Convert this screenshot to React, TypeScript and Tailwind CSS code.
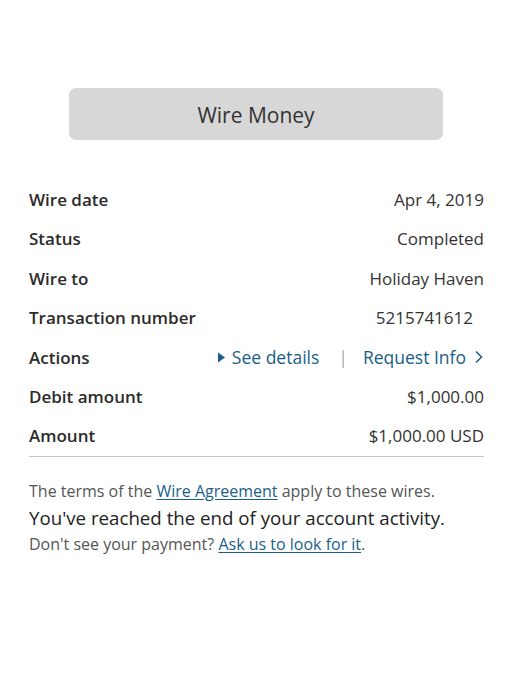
import React from 'react';

const rows: { label: string; value: string; extra?: string }[] = [
  { label: 'Wire date', value: 'Apr 4, 2019' },
  { label: 'Status', value: 'Completed' },
  { label: 'Wire to', value: 'Holiday Haven' },
  { label: 'Transaction number', value: '5215741612', extra: 'pr-[11px]' },
];

const rows2 = [
  { label: 'Debit amount', value: '$1,000.00' },
  { label: 'Amount', value: '$1,000.00 USD' },
];

const Row: React.FC<{ label: string; children: React.ReactNode }> = ({ label, children }) => (
  <div className="flex h-[39.4px] items-center justify-between">
    <span className="font-semibold text-[#2b2b2b]">{label}</span>
    {children}
  </div>
);

export default function App() {
  return (
    <div className="min-h-[700px] bg-white pl-[29px] pr-[22px] pt-[88px] text-[17px] font-['Open_Sans',sans-serif] text-[#333]">
      <div className="ml-[40px] mr-[41px] flex h-[52px] items-center justify-center rounded-[7px] bg-[#d7d7d7] pt-[3px] text-[21px] text-[#333]">
        Wire Money
      </div>

      <div className="mt-[40px]">
        {rows.map((r) => (
          <Row key={r.label} label={r.label}>
            <span className={r.extra}>{r.value}</span>
          </Row>
        ))}
        <Row label="Actions">
          <div className="flex items-center text-[17.5px] text-[#1a5e87]">
            <svg width="9" height="11" viewBox="0 0 9 11" className="mr-[6px]">
              <path d="M1 0.5 L8 5.5 L1 10.5 Z" fill="#1a5e87" />
            </svg>
            <span>See details</span>
            <span className="ml-[19px] mr-[15px] text-[#aaa]">|</span>
            <span>Request Info</span>
            <svg width="10" height="14" viewBox="0 0 10 14" className="ml-[8px]">
              <path d="M2 1.5 L7.5 7 L2 12.5" fill="none" stroke="#1a5e87" strokeWidth="1.5" />
            </svg>
          </div>
        </Row>
        {rows2.map((r) => (
          <Row key={r.label} label={r.label}>
            <span>{r.value}</span>
          </Row>
        ))}
      </div>

      <div className="border-t border-[#c4c4c4]" />

      <div className="mt-[21px] flex flex-col">
        <p className="text-[16px] leading-[26px] text-[#555]">
          The terms of the <a className="text-[#1a5e87] underline underline-offset-2">Wire Agreement</a> apply to these wires.
        </p>
        <p className="text-[18.7px] leading-[27px] text-[#222]">You've reached the end of your account activity.</p>
        <p className="text-[16px] leading-[26px] text-[#555]">
          Don't see your payment? <a className="text-[#1a5e87] underline underline-offset-2">Ask us to look for it</a>.
        </p>
      </div>
    </div>
  );
}
